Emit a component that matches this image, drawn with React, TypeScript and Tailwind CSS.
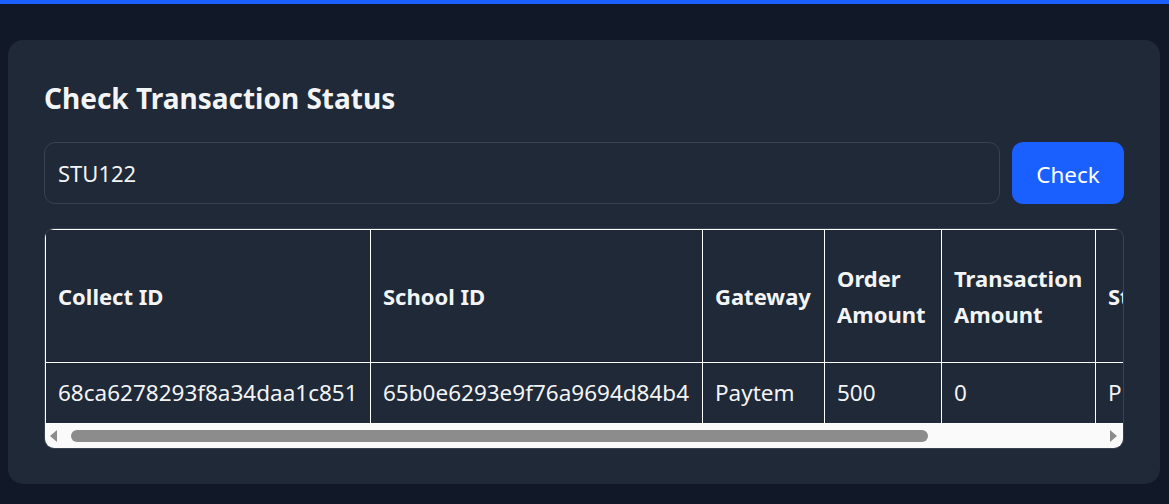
import React from "react";

const cols = [
  { h: ["Collect ID"], v: "68ca6278293f8a34daa1c851", w: 325 },
  { h: ["School ID"], v: "65b0e6293e9f76a9694d84b4", w: 332 },
  { h: ["Gateway"], v: "Paytem", w: 122 },
  { h: ["Order", "Amount"], v: "500", w: 117 },
  { h: ["Transaction", "Amount"], v: "0", w: 154 },
  { h: ["Status"], v: "PENDING", w: 120 },
];

export default function App() {
  return (
    <div
      className="min-h-[504px] bg-[#111827] text-[#f3f4f6]"
      style={{ fontFamily: '"Noto Sans", "Open Sans", sans-serif' }}
    >
      <div className="h-[4px] bg-[#1a5fff]" />
      <div className="pt-[36px] pl-[8px] pr-[9px]">
        <div className="rounded-[15px] bg-[#1f2937] px-[36px] pt-[40px] pb-[35px]">
          <h1 className="text-[28px] font-bold leading-[36px]">Check Transaction Status</h1>
          <div className="mt-[26px] flex gap-[12px]">
            <div className="flex h-[62px] flex-1 items-center rounded-[11px] border border-[#374151] px-[13px] text-[22px]">
              STU122
            </div>
            <button className="h-[62px] w-[112px] rounded-[11px] bg-[#1a5fff] pt-[3px] text-[22.5px] text-white">
              Check
            </button>
          </div>
          <div className="mt-[24px] overflow-hidden rounded-[10px] border border-[#374151]">
            <div className="overflow-hidden">
              <table className="border-collapse text-left" style={{ width: 1170 }}>
                <thead>
                  <tr className="h-[133px]">
                    {cols.map((c, i) => (
                      <th
                        key={i}
                        className="border border-white px-[12px] align-middle text-[22px] font-bold leading-[36px]"
                        style={{ width: c.w, minWidth: c.w }}
                      >
                        {c.h.map((l, j) => (
                          <div key={j} className="whitespace-nowrap">{l}</div>
                        ))}
                      </th>
                    ))}
                  </tr>
                </thead>
                <tbody>
                  <tr className="h-[61px]">
                    {cols.map((c, i) => (
                      <td key={i} className="whitespace-nowrap border border-white px-[12px] text-[22.5px] leading-[36px]">
                        {c.v}
                      </td>
                    ))}
                  </tr>
                </tbody>
              </table>
            </div>
            <div className="relative h-[24px] bg-[#fafafa]">
              <div className="absolute left-[5px] top-[6px] h-0 w-0 border-y-[6px] border-r-[7px] border-y-transparent border-r-[#8c8c8c]" />
              <div className="absolute left-[26px] top-[6px] h-[12px] w-[857px] rounded-full bg-[#8c8c8c]" />
              <div className="absolute right-[6px] top-[6px] h-0 w-0 border-y-[6px] border-l-[7px] border-y-transparent border-l-[#8c8c8c]" />
            </div>
          </div>
        </div>
      </div>
    </div>
  );
}
